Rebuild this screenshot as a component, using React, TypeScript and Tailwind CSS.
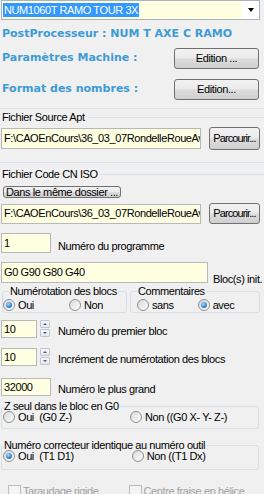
import React from "react";

function Btn({ children, className }: { children: React.ReactNode; className?: string }) {
  return (
    <div
      className={`flex items-center justify-center overflow-hidden rounded-[3px] border border-[#707070] bg-[linear-gradient(#f2f2f2_0%,#ebebeb_45%,#dddddd_52%,#cfcfcf_100%)] text-black whitespace-nowrap ${className ?? ""}`}
    >
      {children}
    </div>
  );
}

function Field({ value, className }: { value: string; className?: string }) {
  return (
    <div
      className={`flex items-center overflow-hidden whitespace-nowrap border border-[#b5b9be] bg-[#ffffe1] pl-[2px] ${className ?? ""}`}
    >
      {value}
    </div>
  );
}

function Radio({ checked, label, className }: { checked?: boolean; label: string; className?: string }) {
  return (
    <div className={`flex items-center ${className ?? ""}`}>
      <span className="flex h-[12px] w-[12px] items-center justify-center rounded-full border border-[#8e8f8f] bg-[linear-gradient(135deg,#d8d8d8,#ffffff)]">
        {checked && (
          <span className="h-[6px] w-[6px] rounded-full bg-[radial-gradient(circle_at_40%_35%,#a6dcff,#1d67bd_75%)]" />
        )}
      </span>
      <span className="ml-[3px] whitespace-pre">{label}</span>
    </div>
  );
}

function SpinBtn({ up }: { up?: boolean }) {
  return (
    <span className="flex h-[8px] w-[10px] items-center justify-center rounded-[1px] border border-[#c3c7cd] bg-[linear-gradient(#f7f9fb,#e3e8ee)]">
      {up ? (
        <span className="h-0 w-0 border-x-[2px] border-b-[2px] border-x-transparent border-b-[#4a5f82]" />
      ) : (
        <span className="h-0 w-0 border-x-[2px] border-t-[2px] border-x-transparent border-t-[#4a5f82]" />
      )}
    </span>
  );
}

function Spin({ value, label, className }: { value: string; label: string; className?: string }) {
  return (
    <div className={`ml-[1px] flex h-[18px] items-end ${className ?? ""}`}>
      <Field value={value} className="h-[18px] w-[36px]" />
      <div className="ml-[3px] flex flex-col gap-[1px] self-start">
        <SpinBtn up />
        <SpinBtn />
      </div>
      <span className="ml-[8px] leading-[14px]">{label}</span>
    </div>
  );
}

function Section({ title, className }: { title: string; className?: string }) {
  return (
    <div className={`flex items-center leading-[14px] ${className ?? ""}`}>
      <span className="pl-[2px] pr-[3px]">{title}</span>
      <span className="h-px flex-1 bg-[#d5dfe5]" />
    </div>
  );
}

export default function App() {
  return (
    <div className="h-[494px] w-[264px] overflow-hidden bg-[#f0f0f0] font-['Liberation_Sans',Arial,sans-serif] text-[11px] tracking-[-0.4px] text-black">
      {/* machine selector */}
      <div className="ml-[1px] flex h-[20px] w-[259px] items-center border border-[#a9b3bf] bg-[#ffffe1]">
        <span className="ml-[1px] bg-[#3399ff] px-[1px] leading-[14px] text-white">NUM1060T RAMO TOUR 3X</span>
        <span className="ml-auto flex h-full w-[17px] items-center justify-center bg-white">
          <span className="h-0 w-0 border-x-[3.5px] border-t-[4px] border-x-transparent border-t-black" />
        </span>
      </div>

      <div className="ml-[2px] mt-[7px] font-['DejaVu_Sans',Verdana,sans-serif] text-[11px] font-bold leading-[14px] tracking-normal text-[#3d9bd6]">
        PostProcesseur : NUM T AXE C RAMO
      </div>

      <div className="mt-[7px] flex h-[21px] items-center">
        <span className="ml-[2px] font-['DejaVu_Sans',Verdana,sans-serif] font-bold tracking-normal text-[#3d9bd6]">
          Paramètres Machine :
        </span>
        <Btn className="ml-auto mr-[5px] h-[21px] w-[85px]">Edition ...</Btn>
      </div>

      <div className="mt-[10px] flex h-[21px] items-center">
        <span className="ml-[2px] font-['DejaVu_Sans',Verdana,sans-serif] font-bold tracking-normal text-[#3d9bd6]">
          Format des nombres :
        </span>
        <Btn className="ml-auto mr-[5px] h-[21px] w-[85px]">Edition...</Btn>
      </div>

      <div className="mt-[8px] h-px bg-[#dce3e8]" />
      <Section title="Fichier Source Apt" className="mt-[1px]" />
      <div className="mt-[3px] flex h-[23px] items-center">
        <Field value="F:\CAOEnCours\36_03_07RondelleRoueAv\3" className="ml-[1px] h-[21px] w-[200px]" />
        <Btn className="ml-auto mr-[4px] h-[23px] w-[51px] tracking-[-0.9px]">Parcourir...</Btn>
      </div>

      <div className="mt-[12px] h-px bg-[#dce3e8]" />
      <Section title="Fichier Code CN ISO" className="mt-[4px]" />
      <Btn className="ml-[3px] mt-[5px] h-[12px] w-[118px] leading-[10px]">Dans le même dossier ...</Btn>
      <div className="mt-[5px] flex h-[21px] items-center">
        <Field value="F:\CAOEnCours\36_03_07RondelleRoueAv\3" className="ml-[1px] h-[20px] w-[200px]" />
        <Btn className="ml-auto mr-[4px] h-[21px] w-[51px] tracking-[-0.9px]">Parcourir...</Btn>
      </div>

      <div className="ml-[1px] mt-[9px] flex items-end">
        <Field value="1" className="h-[20px] w-[50px]" />
        <span className="ml-[7px] leading-[14px]">Numéro du programme</span>
      </div>

      <div className="ml-[1px] mt-[9px] flex items-end">
        <Field value="G0 G90 G80 G40" className="h-[21px] w-[207px]" />
        <span className="relative top-[3px] ml-[5px] leading-[14px]">Bloc(s) init.</span>
      </div>

      <div className="mt-[1px] flex">
        <fieldset className="ml-[2px] w-[125px] rounded-[3px] border border-[#d5dfe5]">
          <legend className="ml-[6px] px-[1px] leading-[14px]">Numérotation des blocs</legend>
          <div className="flex h-[14px] items-center">
            <Radio checked label="Oui" className="ml-0" />
            <Radio label="Non" className="ml-[35px]" />
          </div>
        </fieldset>
        <fieldset className="ml-[3px] w-[130px] rounded-[3px] border border-[#d5dfe5]">
          <legend className="ml-[6px] px-[1px] leading-[14px]">Commentaires</legend>
          <div className="flex h-[14px] items-center">
            <Radio label="sans" className="ml-[6px]" />
            <Radio checked label="avec" className="ml-[24px]" />
          </div>
        </fieldset>
      </div>

      <Spin value="10" label="Numéro du premier bloc" className="mt-[7px]" />
      <Spin value="10" label="Incrément de numérotation des blocs" className="mt-[10px]" />

      <div className="ml-[1px] mt-[12px] flex items-end">
        <Field value="32000" className="h-[18px] w-[50px]" />
        <span className="ml-[7px] leading-[14px]">Numéro le plus grand</span>
      </div>

      <fieldset className="ml-[1px] mt-[5px] w-[258px] rounded-[3px] border border-[#d5dfe5] pb-[5px]">
        <legend className="ml-[1px] px-[1px] leading-[10px]">Z seul dans le bloc en G0</legend>
        <div className="flex h-[12px] items-center">
          <Radio label="Oui  (G0 Z-)" className="ml-[1px]" />
          <Radio label="Non ((G0 X- Y- Z-)" className="ml-[58px]" />
        </div>
      </fieldset>

      <fieldset className="ml-[1px] mt-[11px] w-[258px] rounded-[3px] border border-[#d5dfe5] pb-[7px]">
        <legend className="ml-[1px] px-[1px] leading-[10px]">Numéro correcteur identique au numéro outil</legend>
        <div className="flex h-[12px] items-center">
          <Radio checked label="Oui  (T1 D1)" className="ml-[1px]" />
          <Radio label="Non ((T1 Dx)" className="ml-[58px]" />
        </div>
      </fieldset>

      <div className="mt-[15px] flex text-[#a0a0a0]">
        <div className="ml-[8px] flex items-start">
          <span className="h-[13px] w-[13px] border border-[#bcbcbc] bg-[#f4f4f4]" />
          <span className="ml-[2px] leading-[13px]">Taraudage rigide</span>
        </div>
        <div className="ml-[30px] flex items-start">
          <span className="h-[13px] w-[13px] border border-[#bcbcbc] bg-[#f4f4f4]" />
          <span className="ml-[2px] leading-[13px]">Centre fraise en hélice</span>
        </div>
      </div>
    </div>
  );
}
